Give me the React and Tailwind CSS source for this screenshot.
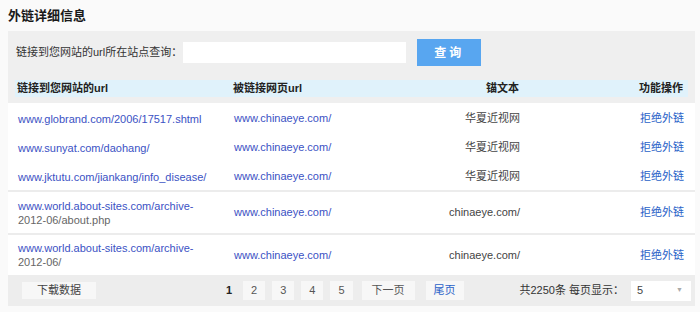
import React from 'react';

const rows = [
  { src: ['www.globrand.com/2006/17517.shtml'], dst: 'www.chinaeye.com/', anchor: '华夏近视网', h: 'h-[29px]' },
  { src: ['www.sunyat.com/daohang/'], dst: 'www.chinaeye.com/', anchor: '华夏近视网', h: 'h-[29px]' },
  { src: ['www.jktutu.com/jiankang/info_disease/'], dst: 'www.chinaeye.com/', anchor: '华夏近视网', h: 'h-[29px]' },
  { src: ['www.world.about-sites.com/archive-', '2012-06/about.php'], dst: 'www.chinaeye.com/', anchor: 'chinaeye.com/', h: 'h-[43px]', sep: true },
  { src: ['www.world.about-sites.com/archive-', '2012-06/'], dst: 'www.chinaeye.com/', anchor: 'chinaeye.com/', h: 'h-[42px]', sep: true },
];

const cols = 'grid grid-cols-[216px_166px_120px_164px] items-center';

function PageBox({ children, className = '', color = 'text-[#555]' }) {
  return (
    <span className={`flex h-[19px] items-center justify-center bg-[#f7f7f7] px-[8px] ${color} ${className}`}>
      {children}
    </span>
  );
}

export default function App() {
  return (
    <div
      className="h-[312px] w-[700px] overflow-hidden bg-[#fafafa] text-[11px] text-[#333]"
      style={{ fontFamily: '"Liberation Sans", Arial, "Noto Sans CJK SC", sans-serif' }}
    >
      {/* Title */}
      <div className="flex h-[31px] items-center pl-[8px] text-[13px] font-bold text-[#1a1a1a]">
        外链详细信息
      </div>

      {/* Search panel + table header */}
      <div className="ml-[8px] w-[687px] bg-[#efefef] pt-[8px] pb-[6px]">
        <div className="flex h-[27px] items-center pl-[8px]">
          <span className="text-[#333]">链接到您网站的url所在站点查询：</span>
          <input className="ml-[1px] h-[21px] w-[223px] bg-white outline-none" />
          <button className="ml-[11px] h-[27px] w-[64px] bg-[#58a6f0] text-[12px] font-bold tracking-[3px] text-white">
            查询
          </button>
        </div>
        <div className={`${cols} mx-[7px] mt-[14px] h-[17px] bg-[#e0f2fb] pl-[2px] font-bold text-[#222]`}>
          <span>链接到您网站的url</span>
          <span>被链接网页url</span>
          <span className="text-right">锚文本</span>
          <span className="text-right">功能操作</span>
        </div>
      </div>

      {/* Rows */}
      <div className="ml-[8px] w-[687px] bg-white">
        {rows.map((r, i) => (
          <div
            key={i}
            className={`${cols} ${r.h} pl-[10px] ${r.sep ? 'border-t-2 border-[#ececec]' : 'pt-[2px]'}`}
          >
            <span className="leading-[14px] text-[#3b52c4]">
              {r.src[0]}
              {r.src[1] && (
                <>
                  <br />
                  <span className="text-[#666]">{r.src[1]}</span>
                </>
              )}
            </span>
            <span className="text-[#3b52c4]">{r.dst}</span>
            <span className="text-right text-[#444]">{r.anchor}</span>
            <span className="text-right text-[#2a62c8]">拒绝外链</span>
          </div>
        ))}
      </div>

      {/* Footer */}
      <div className="ml-[8px] flex h-[31px] w-[687px] items-center bg-[#ededed]">
        <span className="ml-[14px] flex h-[17px] w-[74px] items-center justify-center bg-[#f7f7f7] text-[#444]">
          下载数据
        </span>
        <div className="ml-[126px] flex items-center gap-[7px]">
          <span className="w-[14px] text-center font-bold text-[#222]">1</span>
          <PageBox>2</PageBox>
          <PageBox>3</PageBox>
          <PageBox>4</PageBox>
          <PageBox>5</PageBox>
          <PageBox className="ml-[2px] px-[10px]">下一页</PageBox>
          <PageBox className="ml-[4px]" color="text-[#2a62c8]">尾页</PageBox>
        </div>
        <span className="ml-auto text-[#333]">共2250条 每页显示：</span>
        <span className="mr-[4px] ml-[7px] flex h-[20px] w-[60px] items-center bg-white">
          <span className="pl-[6px] text-[#444]">5</span>
          <span className="ml-auto mr-[8px] text-[7px] text-[#aaa]">▼</span>
        </span>
      </div>
    </div>
  );
}
